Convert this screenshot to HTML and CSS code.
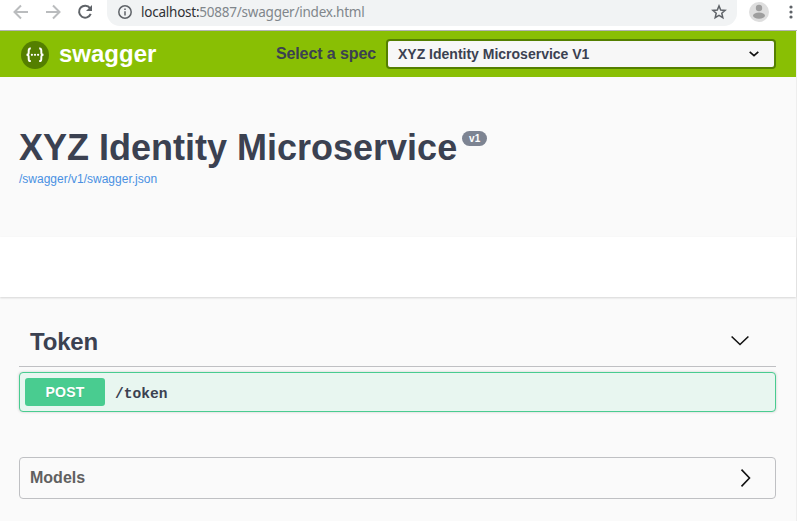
FILE: index.html
```
<!DOCTYPE html>
<html lang="en">
<head>
<meta charset="utf-8">
<title>Swagger UI</title>
<link rel="stylesheet" href="styles.css">
</head>
<body>
<div class="browser">
  <svg class="nav back" width="16" height="16" viewBox="0 0 16 16"><path d="M15 8H2M8 1.500L1.500 8L8 14.500"/></svg>
  <svg class="nav forward" width="16" height="16" viewBox="0 0 16 16"><path d="M1 8H14M8 1.500L14.500 8L8 14.500"/></svg>
  <svg class="reload" width="16" height="16" viewBox="0 0 16 16"><path d="M13 4.200A6 6 0 1 0 13.700 9.800"/><path class="tip" d="M15 1V7H9Z"/></svg>
  <div class="address">
    <svg class="info" width="14" height="14" viewBox="0 0 14 14"><circle cx="7" cy="7" r="6.200"/><path d="M7 6.200V10.500M7 3.500V5"/></svg>
    <span class="url"><b>localhost:</b>50887/swagger/index.html</span>
    <svg class="star" width="16" height="16" viewBox="0 0 16 16"><path d="M8 1.900L9.700 6L14.100 6.400L10.800 9.200L11.800 13.600L8 11.300L4.200 13.600L5.200 9.200L1.900 6.400L6.300 6Z"/></svg>
  </div>
  <svg class="avatar" width="20" height="20" viewBox="0 0 20 20"><circle cx="10" cy="10" r="10" fill="#dedede"/><circle cx="10" cy="6" r="3.200" fill="#9e9e9e"/><ellipse cx="10" cy="13.600" rx="6" ry="3.100" fill="#9e9e9e"/></svg>
  <svg class="dots" width="4" height="14" viewBox="0 0 4 14"><circle cx="2" cy="2" r="1.600"/><circle cx="2" cy="7" r="1.600"/><circle cx="2" cy="12" r="1.600"/></svg>
</div>
<div class="page">
  <header class="topbar">
    <svg class="logo" width="28" height="28" viewBox="0 0 28 28"><circle cx="14" cy="14" r="14" fill="#547f00"/><path d="M9.800 7.500C7.900 7.300 7.600 8.400 7.700 10.700C7.800 12.900 7.300 13.800 5.500 13.800C7.300 13.800 7.800 14.700 7.700 16.900C7.600 19.200 7.900 20.300 9.800 20.100M18.200 7.500C20.100 7.300 20.400 8.400 20.300 10.700C20.200 12.900 20.700 13.800 22.500 13.800C20.700 13.800 20.200 14.700 20.300 16.900C20.400 19.200 20.100 20.300 18.200 20.100" fill="none" stroke="#fff" stroke-width="2"/><circle cx="10.900" cy="13.800" r="1.100" fill="#fff"/><circle cx="14" cy="13.800" r="1.100" fill="#fff"/><circle cx="17.100" cy="13.800" r="1.100" fill="#fff"/></svg>
    <span class="brand">swagger</span>
    <span class="label">Select a spec</span>
    <div class="select"><span>XYZ Identity Microservice V1</span>
      <svg width="10" height="6" viewBox="0 0 10 6"><path d="M.700 .800L5 4.600L9.300 .800" fill="none" stroke="#111" stroke-width="1.700"/></svg>
    </div>
  </header>
  <section class="intro">
    <div class="heading"><h1>XYZ Identity Microservice</h1><span class="version">v1</span></div>
    <a class="spec">/swagger/v1/swagger.json</a>
  </section>
  <section class="schemes"></section>
  <main>
    <div class="tag"><h2>Token</h2>
      <svg width="20" height="12" viewBox="0 0 20 12"><path d="M1.600 1.500L10 9.500L18.400 1.500"/></svg>
    </div>
    <div class="operation"><span class="method">POST</span><span class="path">/token</span></div>
    <div class="models"><span>Models</span>
      <svg width="12" height="20" viewBox="0 0 12 20"><path d="M1.500 1.600L9.500 10L1.500 18.400"/></svg>
    </div>
  </main>
</div>
</body>
</html>
```
FILE: styles.css
```
* { box-sizing: border-box; }
body { margin: 0; height: 521px; overflow: hidden; background: #fafafa; color: #3b4151; font-family: "Liberation Sans", Arial, sans-serif; }
svg { display: block; flex: none; fill: none; }
h1, h2 { margin: 0; }

.browser { display: flex; align-items: flex-start; height: 31px; padding-left: 13px; background: #fff; border-bottom: 1px solid #b3b3b3; }
.nav { margin: 4px 16px 0 0; stroke: #babcbe; stroke-width: 2; }
.reload { margin-top: 4px; stroke: #5f6368; stroke-width: 2; }
.reload .tip { fill: #5f6368; stroke: none; }
.address { display: flex; align-items: flex-start; width: 630px; height: 26px; margin-left: 14px; padding: 0 10px 0 11px; background: #f1f3f4; border-radius: 0 0 13px 13px; }
.info { margin-top: 5px; stroke: #5f6368; stroke-width: 1.5; }
.url { flex: 1; margin: 3px 0 0 9px; font: 13.5px/19px "Noto Sans", sans-serif; color: #80868b; white-space: nowrap; letter-spacing: -.23px; }
.url b { font-weight: 400; color: #303134; }
.star { margin-top: 4px; stroke: #5f6368; stroke-width: 1.5; }
.avatar { margin: 2px 0 0 12px; }
.dots { margin: 5px 0 0 20px; fill: #5f6368; }

.page { height: 490px; border-right: 1px solid #eee; }
.topbar { display: flex; align-items: center; height: 46px; padding: 0 20px 0 21px; background: #89bf04; }
.logo { margin-top: 2px; }
.brand { margin: 0 0 1px 10px; color: #fff; font-size: 24px; font-weight: 700; line-height: 28px; }
.label { margin: 0 10px 1px auto; font-size: 16px; font-weight: 700; letter-spacing: -.1px; }
.select { display: flex; align-items: center; justify-content: space-between; width: 390px; height: 30px; padding: 0 15px 0 10px; border: 2px solid #547f00; border-radius: 4px; background: #f7f7f7; font-size: 14px; font-weight: 700; }

.intro { height: 160px; padding: 50px 19px 0; }
.heading { display: flex; align-items: flex-start; }
h1 { font-size: 36px; line-height: 42px; white-space: nowrap; }
.version { width: 25px; height: 15px; margin: 4px 0 0 5px; border-radius: 8px; background: #7d8492; color: #fff; font-size: 10px; font-weight: 700; line-height: 15px; text-align: center; }
.spec { display: block; margin-top: 3px; color: #4990e2; font-size: 12px; line-height: 14px; }
.schemes { height: 60px; background: #fff; box-shadow: 0 1px 2px rgba(0,0,0,.15); }

main { padding: 23px 20px 0 19px; }
.tag { display: flex; align-items: center; justify-content: space-between; height: 47px; padding: 0 26px 3px 11px; border-bottom: 1px solid #bfc0c3; }
.tag h2 { font-size: 24px; line-height: 28px; letter-spacing: -.2px; }
.tag svg, .models svg { stroke: #111; stroke-width: 1.6; }
.tag svg { margin-bottom: 2px; }
.operation { display: flex; align-items: center; height: 40px; margin-top: 5px; padding: 0 5px; border: 1px solid #49cc90; border-radius: 4px; background: #e8f6f0; box-shadow: 0 0 3px rgba(0,0,0,.19); }
.method { width: 80px; height: 28px; border-radius: 3px; background: #49cc90; color: #fff; font-size: 14px; font-weight: 700; line-height: 28px; text-align: center; text-shadow: 0 1px 0 rgba(0,0,0,.1); letter-spacing: .2px; }
.path { margin: 4px 0 0 10px; font: 700 14.6px/18px "Liberation Mono", monospace; }
.models { display: flex; align-items: center; justify-content: space-between; height: 42px; margin-top: 45px; padding: 0 23px 0 10px; border: 1px solid #bfc0c3; border-radius: 4px; color: #606060; font-size: 16px; font-weight: 700; }
```
